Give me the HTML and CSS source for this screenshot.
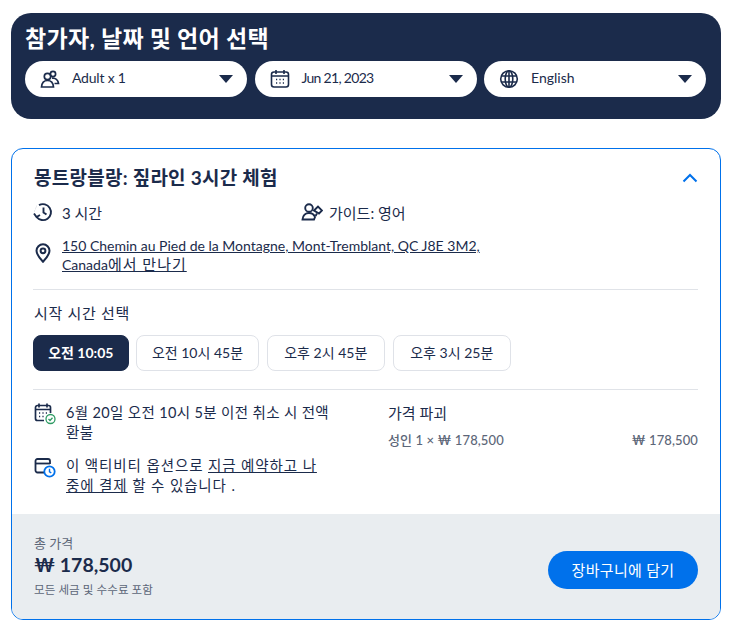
FILE: index.html

```html
<!DOCTYPE html>
<html lang="ko">
<head>
  <meta charset="UTF-8">
  <meta name="viewport" content="width=device-width, initial-scale=1.0">
  <title>참가자, 날짜 및 언어 선택</title>
  <link rel="stylesheet" href="styles.css">
</head>
<body>
  <section class="picker">
    <h1>참가자, 날짜 및 언어 선택</h1>
    <div class="picker-row">
      <div class="pill">
        <svg class="pill-icon" viewBox="0 0 20 20" fill="none" stroke="#1b2b4b" stroke-width="1.7"><circle cx="7.5" cy="7.5" r="3.2"/><circle cx="13" cy="5" r="2.6"/><path d="M1.5 18c.3-4 2.8-6.500 6-6.500s5.700 2.500 6 6.500z"/><path d="M12 9.200c3.500-.5 6 2 6.500 5.300h-4"/></svg>
        <span class="pill-text adult">Adult x 1</span>
        <span class="caret"></span>
      </div>
      <div class="pill">
        <svg class="pill-icon" viewBox="0 0 20 20" fill="none" stroke="#1b2b4b" stroke-width="1.6"><rect x="1.500" y="3" width="17" height="15" rx="2.500"/><path d="M1.500 7h17M6 1v4M14 1v4"/><path d="M6 10.500h1.200M9.400 10.500h1.200M12.800 10.500H14M6 14h1.200M9.400 14h1.200M12.800 14H14" stroke-width="1.300"/></svg>
        <span class="pill-text date">Jun 21, 2023</span>
        <span class="caret"></span>
      </div>
      <div class="pill">
        <svg class="pill-icon" viewBox="0 0 20 20" fill="none" stroke="#1b2b4b" stroke-width="1.600"><circle cx="10" cy="10" r="8.300"/><ellipse cx="10" cy="10" rx="3.800" ry="8.300"/><path d="M10 1.700v16.600M2 7h16M2 13h16"/></svg>
        <span class="pill-text">English</span>
        <span class="caret"></span>
      </div>
    </div>
  </section>

  <section class="card">
    <div class="card-body">
      <div class="card-head">
        <h2>몽트랑블랑: 짚라인 3시간 체험</h2>
        <svg class="chevron" viewBox="0 0 16 10" fill="none" stroke="#0071eb" stroke-width="2"><path d="M1.500 8.500 8 2l6.500 6.500"/></svg>
      </div>

      <div class="facts">
        <div class="fact">
          <svg class="fact-icon" viewBox="0 0 20 20" fill="none" stroke="#1b2b4b" stroke-width="1.900"><path d="M6 3.200A8 8 0 1 1 3.600 15"/><path d="M10.500 5.500v5l3 2"/><path d="M1 11.500l2.500 3.500 3.500-2"/><path d="M2.300 6.500h.1M1.500 9h.1M3.800 4.500h.1" stroke-width="2"/></svg>
          <span>3 시간</span>
        </div>
        <div class="fact">
          <svg class="fact-icon wide" viewBox="0 0 22 20" fill="none" stroke="#1b2b4b" stroke-width="1.900"><circle cx="8" cy="6" r="3.800"/><path d="M1.500 17.500c.3-4 3-6.500 6.500-6.500 3 0 5 1.500 6 4l-1 2.500z"/><path d="M13 8.500l4-4 4 4-3 3z"/><path d="M14.500 14l1.500-2.500"/></svg>
          <span>가이드: 영어</span>
        </div>
      </div>

      <div class="address">
        <svg class="pin" viewBox="0 0 16 20" fill="none" stroke="#1b2b4b" stroke-width="2"><path d="M8 18.700C4 14.500 1.500 11.300 1.500 7.800a6.500 6.500 0 0 1 13 0c0 3.500-2.500 6.700-6.500 10.900z"/><circle cx="8" cy="7.800" r="2.400"/></svg>
        <a class="address-link">150 Chemin au Pied de la Montagne, Mont-Tremblant, QC J8E 3M2,<br>Canada<span class="address-ko">에서 만나기</span></a>
      </div>

      <hr class="rule">

      <p class="times-label">시작 시간 선택</p>
      <div class="times">
        <button class="time active">오전 10:05</button>
        <button class="time">오전 10시 45분</button>
        <button class="time">오후 2시 45분</button>
        <button class="time">오후 3시 25분</button>
      </div>

      <hr class="rule">

      <div class="details">
        <div class="policies">
          <div class="policy">
            <svg class="policy-icon" viewBox="0 0 22 22" fill="none" stroke="#1b2b4b" stroke-width="1.700"><path d="M10 17.500H3.500a2 2 0 0 1-2-2V4.500a2 2 0 0 1 2-2h11a2 2 0 0 1 2 2V10"/><path d="M1.500 6.500h15M5 .5v4M13 .5v4"/><path d="M5 10h1.200M8.400 10h1.200M11.800 10H13M5 13.500h1.200M8.400 13.500h1.200" stroke-width="1.300"/><circle cx="16.500" cy="16" r="4.500" fill="#fff" stroke="#2e9a63" stroke-width="1.300"/><path d="M14.500 16l1.500 1.500 2.500-2.800" stroke="#2e9a63" stroke-width="1.300"/></svg>
            <p>6월 20일 오전 10시 5분 이전 취소 시 전액 환불</p>
          </div>
          <div class="policy">
            <svg class="policy-icon" viewBox="0 0 22 22" fill="none" stroke="#1b2b4b" stroke-width="1.800"><path d="M10 16.500H3.500a2 2 0 0 1-2-2V5a2 2 0 0 1 2-2h10.500a2 2 0 0 1 2 2v3"/><path d="M1.500 7.500h14.500"/><circle cx="15.500" cy="15.500" r="5.200" fill="#fff" stroke="#0071eb" stroke-width="1.800"/><path d="M15.500 12.800v3l1.800 1" stroke="#0071eb" stroke-width="1.400"/></svg>
            <p class="pay-later">이 액티비티 옵션으로 <a class="inline-link">지금 예약하고 나<br>중에 결제</a> 할 수 있습니다 .</p>
          </div>
        </div>
        <div class="price-info">
          <p class="price-title">가격 파괴</p>
          <div class="price-line">
            <span>성인 1 × ₩ 178,500</span>
            <span>₩ 178,500</span>
          </div>
        </div>
      </div>
    </div>

    <div class="card-foot">
      <div class="total">
        <p class="total-label">총 가격</p>
        <p class="total-price">₩ 178,500</p>
        <p class="total-note">모든 세금 및 수수료 포함</p>
      </div>
      <button class="cart">장바구니에 담기</button>
    </div>
  </section>
</body>
</html>
```

FILE: styles.css

```css
* {
  box-sizing: border-box;
}
body {
  margin: 0;
  padding: 13px 11px 0;
  font-family: Lato, "Noto Sans CJK KR", sans-serif;
  font-size: 14px;
  color: #1b2b4b;
  background: #fff;
}
h1, h2, p {
  margin: 0;
}
.picker {
  height: 106px;
  padding: 12px 15px 0 14px;
  background: #1b2b4b;
  border-radius: 20px;
}
.picker h1 {
  font-size: 23px;
  line-height: 26px;
  font-weight: 700;
  letter-spacing: 0.3px;
  color: #fff;
}
.picker-row {
  display: grid;
  grid-template-columns: repeat(3, 222px);
  column-gap: 7.500px;
  margin-top: 10px;
}
.pill {
  display: flex;
  align-items: center;
  height: 36px;
  padding: 0 14px 0 15px;
  background: #fff;
  border-radius: 18px;
}
.pill-icon {
  width: 20px;
  height: 20px;
  flex: none;
}
.pill-text {
  flex: 1;
  margin-left: 12px;
  padding-bottom: 3px;
  font-size: 14px;
}
.pill-text.adult {
  letter-spacing: -0.2px;
}
.pill-text.date {
  letter-spacing: -0.7px;
}
.caret {
  width: 0;
  height: 0;
  border-left: 7px solid transparent;
  border-right: 7px solid transparent;
  border-top: 8px solid #1b2b4b;
}
.card {
  margin-top: 29px;
  height: 472px;
  border: 1px solid #0071eb;
  border-radius: 12px;
  overflow: hidden;
  display: flex;
  flex-direction: column;
}
.card-body {
  flex: 1;
  padding: 17px 22px 0 21px;
}
.card-head {
  display: flex;
  justify-content: space-between;
  align-items: center;
  height: 24px;
}
.card-head h2 {
  padding-left: 1px;
  font-size: 19px;
  line-height: 24px;
  font-weight: 700;
  letter-spacing: 0.25px;
}
.chevron {
  width: 16px;
  height: 10px;
}
.facts {
  display: grid;
  grid-template-columns: 268px 1fr;
  margin-top: 10px;
  font-size: 15px;
}
.fact {
  display: flex;
  align-items: center;
  gap: 9px;
  height: 24px;
}
.fact-icon {
  width: 20px;
  height: 20px;
}
.fact-icon.wide {
  width: 22px;
  margin-right: -3px;
}
.address {
  display: flex;
  gap: 10px;
  margin-top: 13px;
}
.pin {
  width: 18px;
  height: 20px;
  flex: none;
  margin-top: 6px;
  margin-left: 1px;
}
.address-link {
  line-height: 18px;
  text-decoration: underline;
}
.address-ko {
  font-size: 15px;
  letter-spacing: 1px;
}
.rule {
  margin: 15px 0 0;
  border: 0;
  border-top: 1px solid #e0e3e8;
}
.times-label {
  margin-top: 13px;
  padding-left: 1px;
  line-height: 20px;
  font-size: 15px;
  letter-spacing: 0.7px;
}
.times {
  display: flex;
  gap: 7.500px;
  margin-top: 12px;
  margin-bottom: 18px;
}
.time {
  height: 36px;
  width: 118.500px;
  padding: 0 0 3px;
  font-family: inherit;
  font-size: 14px;
  color: #1b2b4b;
  background: #fff;
  border: 1px solid #dfe2e8;
  border-radius: 8px;
}
.time:nth-child(2) {
  width: 123px;
}
.time.active {
  width: 95.500px;
  color: #fff;
  font-weight: 700;
  background: #1b2b4b;
  border-color: #1b2b4b;
}
.details {
  display: flex;
  margin-top: 13px;
}
.policies {
  width: 298px;
  margin-right: 57px;
}
.policy {
  display: flex;
  gap: 10px;
  margin-bottom: 13px;
}
.policy p {
  line-height: 20px;
  font-size: 14.500px;
  letter-spacing: 0.35px;
}
.policy p.pay-later {
  letter-spacing: 0.9px;
}
.policy-icon {
  width: 22px;
  height: 22px;
  flex: none;
  margin-left: 1px;
}
.inline-link {
  text-decoration: underline;
}
.price-info {
  flex: 1;
}
.price-title {
  line-height: 20px;
  font-size: 15px;
}
.price-line {
  display: flex;
  justify-content: space-between;
  margin-top: 7px;
  line-height: 20px;
  font-size: 13px;
  font-weight: 500;
  letter-spacing: 0.1px;
  color: #5c6678;
}
.card-foot {
  height: 105px;
  padding: 19px 22px 0;
  background: #e9edf0;
  display: flex;
  justify-content: space-between;
}
.total-label {
  margin-top: 1px;
  font-size: 13px;
  line-height: 18px;
  color: #5c6678;
}
.total-price {
  font-size: 19.500px;
  line-height: 25px;
  font-weight: 700;
}
.total-note {
  margin-top: 5px;
  font-size: 11.500px;
  line-height: 16px;
  letter-spacing: 0.1px;
  color: #5c6678;
}
.cart {
  width: 150px;
  height: 38px;
  margin-top: 18px;
  padding: 0 0 2px;
  font-family: inherit;
  font-size: 15px;
  letter-spacing: 0.3px;
  color: #fff;
  background: #0071eb;
  border: 0;
  border-radius: 19px;
}
```
